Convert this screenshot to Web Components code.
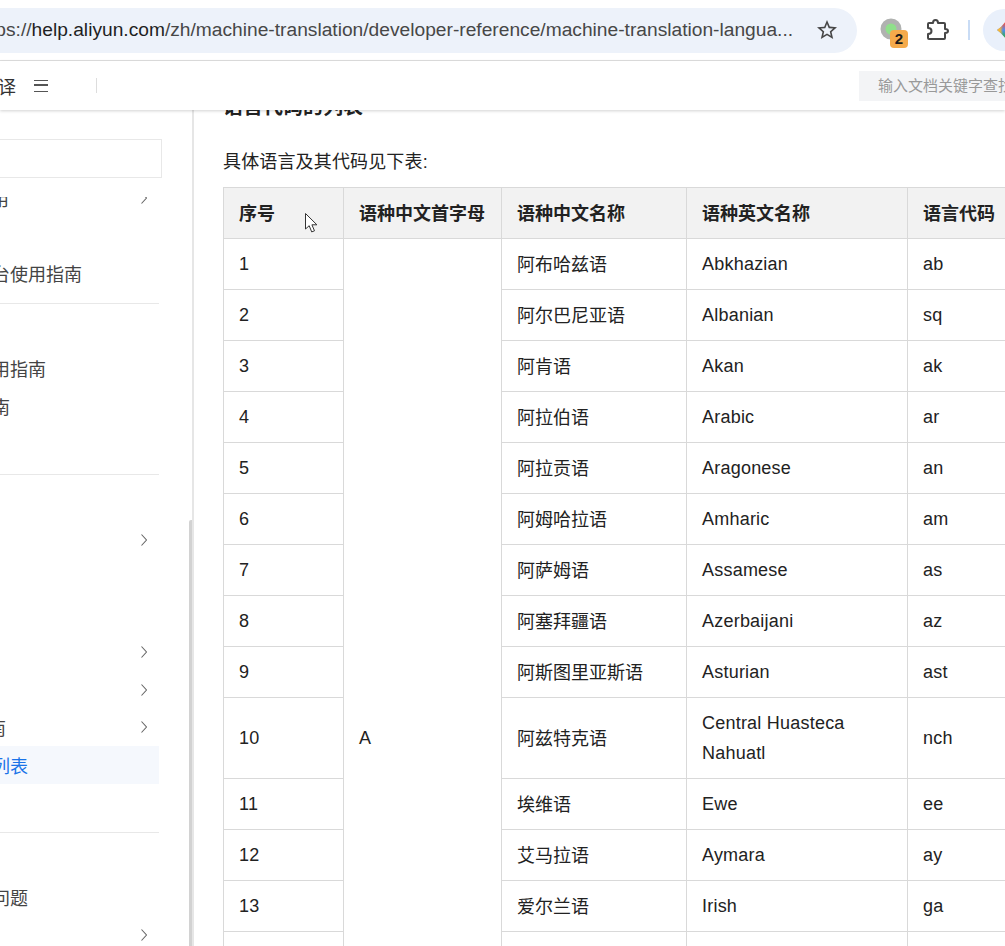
<!DOCTYPE html>
<html lang="zh">
<head>
<meta charset="utf-8">
<title>语言代码列表</title>
<style>
  html, body { margin: 0; height: 100%; overflow: hidden; background: #fff; }
  body { font-family: "Liberation Sans", "Noto Sans CJK SC", sans-serif; display: flex; flex-direction: column; height: 946px; }
</style>
</head>
<body>
<browser-bar url-host="help.aliyun.com" url-rest="/zh/machine-translation/developer-reference/machine-translation-langua..."></browser-bar>
<doc-header></doc-header>
<doc-main>
  <side-nav slot="side">
    <side-section top="-18" bottom="11">
      <side-item shift="-27" chevron>使用</side-item>
      <side-item></side-item>
      <side-item shift="-44">控制台使用指南</side-item>
    </side-section>
    <side-section>
      <side-item shift="-26">使用指南</side-item>
      <side-item shift="-26">指南</side-item>
    </side-section>
    <side-section bottom="48">
      <side-item chevron></side-item>
      <side-item></side-item>
      <side-item></side-item>
      <side-item chevron></side-item>
      <side-item chevron></side-item>
      <side-item shift="-66" chevron>使用指南</side-item>
      <side-item shift="-80" active>语言代码列表</side-item>
    </side-section>
    <side-section>
      <side-item shift="-44">常见问题</side-item>
      <side-item chevron></side-item>
    </side-section>
  </side-nav>
  <lang-table></lang-table>
</doc-main>
<script>
class BrowserBar extends HTMLElement {
  constructor() {
    super();
    this.attachShadow({mode: "open"});
    this.shadowRoot.innerHTML = `
      <style>
        :host { display: flex; align-items: center; height: 60px; border-bottom: 1px solid #e0e0e0; background: #fff; overflow: hidden; flex: none; }
        #omni { display: flex; align-items: center; flex: none; box-sizing: border-box; width: 897px; margin-left: -40px; padding-left: 14px; height: 45px; background: #edf2fa; border-radius: 23px; font-size: 19.200px; white-space: nowrap; color: #474747; }
        #url { flex: none; }
        #url b { font-weight: normal; color: #1f1f1f; }
        #star { margin-left: auto; margin-right: 18px; width: 24px; height: 24px; fill: #474747; flex: none; }
        #ext { position: relative; margin-left: 23px; width: 24px; height: 24px; flex: none; }
        #ext svg { display: block; }
        #badge { position: absolute; left: 10px; top: 12px; width: 18px; height: 18px; border-radius: 4px; background: #f5aa4b; color: #1b1b1b; font: bold 15px/18px "Liberation Sans", sans-serif; text-align: center; }
        #puzzle { margin-left: 21px; width: 24px; height: 24px; flex: none; }
        #sep { margin-left: 19px; width: 2px; height: 20px; background: #c9dcf5; flex: none; }
        #profile { margin-left: 13px; width: 42px; height: 42px; border-radius: 50%; background: #e9f0fb; flex: none; }
      </style>
      <div id="omni">
        <div id="url"><span>https://</span><b id="host"></b><span id="rest"></span></div>
        <svg id="star" viewBox="0 0 24 24"><path d="M22 9.24l-7.19-.62L12 2 9.19 8.63 2 9.24l5.46 4.73L5.82 21 12 17.27 18.18 21l-1.63-7.03L22 9.24zM12 15.4l-3.76 2.27 1-4.28-3.32-2.88 4.38-.38L12 6.1l1.71 4.04 4.38.38-3.32 2.88 1 4.28L12 15.4z"/></svg>
      </div>
      <div id="ext">
        <svg width="24" height="24" viewBox="0 0 24 24"><circle cx="11" cy="11" r="8" fill="#8fe08a" stroke="#b0b2b0" stroke-width="5"/></svg>
        <div id="badge">2</div>
      </div>
      <svg id="puzzle" viewBox="0 0 24 24"><path fill="none" stroke="#474747" stroke-width="2" stroke-linejoin="round" d="M4 5h4c0-2 1.200-3 2.500-3S13 3 13 5h6c.6 0 1 .4 1 1v5c1.800 0 3 .8 3 2s-1.200 2-3 2v5c0 .6-.4 1-1 1H4c-.6 0-1-.4-1-1v-4c2 0 3.500-1.200 3.500-3S5 10 3 10V6c0-.6.4-1 1-1z"/></svg>
      <div id="sep"></div>
      <div id="profile">
        <svg width="42" height="42" viewBox="0 0 42 42">
          <defs>
            <linearGradient id="v" x1="0" y1="0" x2="0" y2="1"><stop offset="0.2" stop-color="#e8564a"/><stop offset="0.5" stop-color="#4c8df6"/><stop offset="0.8" stop-color="#34a853"/></linearGradient>
            <linearGradient id="h" x1="0" y1="0" x2="1" y2="0"><stop offset="0.3" stop-color="#f6b73c"/><stop offset="0.6" stop-color="#f6b73c" stop-opacity="0"/></linearGradient>
          </defs>
          <path fill="url(#v)" d="M14 21Q20 17 24 10V32Q20 25 14 21z"/>
          <path fill="url(#h)" d="M14 21Q20 17 24 10V32Q20 25 14 21z"/>
        </svg>
      </div>
    `;
    this.shadowRoot.getElementById("host").textContent = this.getAttribute("url-host");
    this.shadowRoot.getElementById("rest").textContent = this.getAttribute("url-rest");
  }
}

class DocHeader extends HTMLElement {
  constructor() {
    super();
    this.attachShadow({mode: "open"});
    this.shadowRoot.innerHTML = `
      <style>
        :host { display: flex; align-items: center; position: relative; z-index: 2; height: 49px; background: #fff; box-shadow: 0 1px 3px rgba(0,0,0,.18); overflow: hidden; flex: none; font-size: 18px; color: #333; }
        #title { margin-left: -56px; width: 72px; white-space: nowrap; flex: none; }
        #menu { margin-left: 18px; width: 14px; height: 12px; flex: none; border-top: 1.5px solid #555; border-bottom: 1.5px solid #555; position: relative; box-sizing: border-box; }
        #menu::after { content: ""; position: absolute; left: 0; right: 0; top: 3.500px; height: 1.500px; background: #555; }
        #line { margin-left: 48px; width: 1px; height: 15px; background: #ddd; flex: none; }
        #search { margin-left: 762px; width: 200px; height: 30px; flex: none; box-sizing: border-box; padding-left: 19px; background: #f3f4f6; color: #999; font-size: 15px; line-height: 30px; white-space: nowrap; }
      </style>
      <div id="title">机器翻译</div>
      <div id="menu"></div>
      <div id="line"></div>
      <div id="search">输入文档关键字查找</div>
    `;
  }
}

class DocMain extends HTMLElement {
  constructor() {
    super();
    this.attachShadow({mode: "open"});
    this.shadowRoot.innerHTML = `
      <style>
        :host { display: flex; flex: 1; min-height: 0; overflow: hidden; position: relative; }
        #content { flex: 1; min-width: 0; }
      </style>
      <slot name="side"></slot>
      <div id="content"><slot></slot></div>
    `;
  }
}

class SideNav extends HTMLElement {
  constructor() {
    super();
    this.attachShadow({mode: "open"});
    this.shadowRoot.innerHTML = `
      <style>
        :host { display: flex; flex-direction: column; position: relative; box-sizing: border-box; width: 194px; flex: none; border-right: 2px solid #e6e6e6; overflow: hidden; }
        #box { flex: none; margin: 29px 30px 0 -10px; height: 37px; border: 1px solid #e8e8e8; border-left: none; }
        #list { flex: 1; min-height: 0; margin-top: 19px; overflow: hidden; width: 159px; }
        #thumb { position: absolute; right: -2px; top: 410px; bottom: 0; width: 5px; background: #d2d2d2; border-radius: 2px 2px 0 0; }
      </style>
      <div id="box"></div>
      <div id="list"><slot></slot></div>
      <div id="thumb"></div>
    `;
  }
}

class SideSection extends HTMLElement {
  constructor() {
    super();
    this.attachShadow({mode: "open"});
    this.shadowRoot.innerHTML = `
      <style>
        :host { display: block; padding: 46px 0 49.500px; border-bottom: 1px solid #e8e8e8; }
      </style>
      <slot></slot>
    `;
    if (this.hasAttribute("top")) {
      this.style.marginTop = this.getAttribute("top") + "px";
      this.style.paddingTop = "0";
    }
    if (this.hasAttribute("bottom")) this.style.paddingBottom = this.getAttribute("bottom") + "px";
  }
}

class SideItem extends HTMLElement {
  constructor() {
    super();
    this.attachShadow({mode: "open"});
    this.shadowRoot.innerHTML = `
      <style>
        :host { display: flex; align-items: center; height: 37.500px; font-size: 18px; color: #444; white-space: nowrap; }
        :host([active]) { background: #f5f8fd; color: #1a73e8; }
        #text { flex: 1; min-width: 0; }
        svg { flex: none; margin-right: 12px; display: none; }
        :host([chevron]) svg { display: block; }
      </style>
      <div id="text"><slot></slot></div>
      <svg width="6" height="12" viewBox="0 0 6 12"><path d="M.5.5 5.500 6 .5 11.500" fill="none" stroke="#666" stroke-width="1.100"/></svg>
    `;
    this.shadowRoot.getElementById("text").style.marginLeft = (this.getAttribute("shift") || 0) + "px";
  }
}

class LangTable extends HTMLElement {
  constructor() {
    super();
    this.attachShadow({mode: "open"});
    var rows = [
      ["阿布哈兹语", "Abkhazian", "ab"],
      ["阿尔巴尼亚语", "Albanian", "sq"],
      ["阿肯语", "Akan", "ak"],
      ["阿拉伯语", "Arabic", "ar"],
      ["阿拉贡语", "Aragonese", "an"],
      ["阿姆哈拉语", "Amharic", "am"],
      ["阿萨姆语", "Assamese", "as"],
      ["阿塞拜疆语", "Azerbaijani", "az"],
      ["阿斯图里亚斯语", "Asturian", "ast"],
      ["阿兹特克语", "Central Huasteca Nahuatl", "nch"],
      ["埃维语", "Ewe", "ee"],
      ["艾马拉语", "Aymara", "ay"],
      ["爱尔兰语", "Irish", "ga"],
      ["爱沙尼亚语", "Estonian", "et"],
      ["奥杰布瓦语", "Ojibwa", "oj"],
      ["奥克语", "Occitan", "oc"],
      ["奥里亚语", "Oriya", "or"],
      ["奥罗莫语", "Oromo", "om"],
      ["奥塞梯语", "Ossetian", "os"]
    ];
    var body = rows.map((r, i) => {
      var letter = i == 0 ? `<td rowspan="${rows.length}" class="latin">A</td>` : "";
      return `<tr><td class="latin">${i + 1}</td>${letter}<td class="cjk">${r[0]}</td><td class="latin">${r[1]}</td><td class="latin">${r[2]}</td></tr>`;
    }).join("");
    this.shadowRoot.innerHTML = `
      <style>
        :host { display: block; position: relative; padding-left: 29px; color: #222; font-size: 18px; }
        h2 { margin: -18px 0 0; font-size: 20px; line-height: 30px; font-weight: bold; color: #222; }
        p { margin: 25px 0 10px; line-height: 30px; letter-spacing: .15px; }
        table { border-collapse: collapse; table-layout: fixed; width: 834px; }
        th, td { box-sizing: border-box; border: 1px solid #d9d9d9; padding: 10px 15px; line-height: 30px; text-align: left; vertical-align: middle; }
        th { background: #f2f2f2; font-weight: bold; }
        th, .cjk { padding-top: 11px; padding-bottom: 9px; }
        .latin { letter-spacing: .22px; }
        #cursor { position: absolute; left: 111px; top: 121px; }
      </style>
      <h2>语言代码的列表</h2>
      <p>具体语言及其代码见下表:</p>
      <table>
        <colgroup><col style="width:120px"><col style="width:158px"><col style="width:185px"><col style="width:221px"><col style="width:150px"></colgroup>
        <thead><tr><th>序号</th><th>语种中文首字母</th><th>语种中文名称</th><th>语种英文名称</th><th>语言代码</th></tr></thead>
        <tbody>${body}</tbody>
      </table>
      <svg id="cursor" width="14" height="21" viewBox="0 0 14 21"><path d="M.5.5v15.500l3.700-3.300 2.500 6.200 2.800-1.100-2.600-6h5z" fill="#fff" stroke="#333" stroke-width="1"/></svg>
    `;
  }
}

customElements.define("browser-bar", BrowserBar);
customElements.define("doc-header", DocHeader);
customElements.define("doc-main", DocMain);
customElements.define("side-nav", SideNav);
customElements.define("side-section", SideSection);
customElements.define("side-item", SideItem);
customElements.define("lang-table", LangTable);
</script>
</body>
</html>
